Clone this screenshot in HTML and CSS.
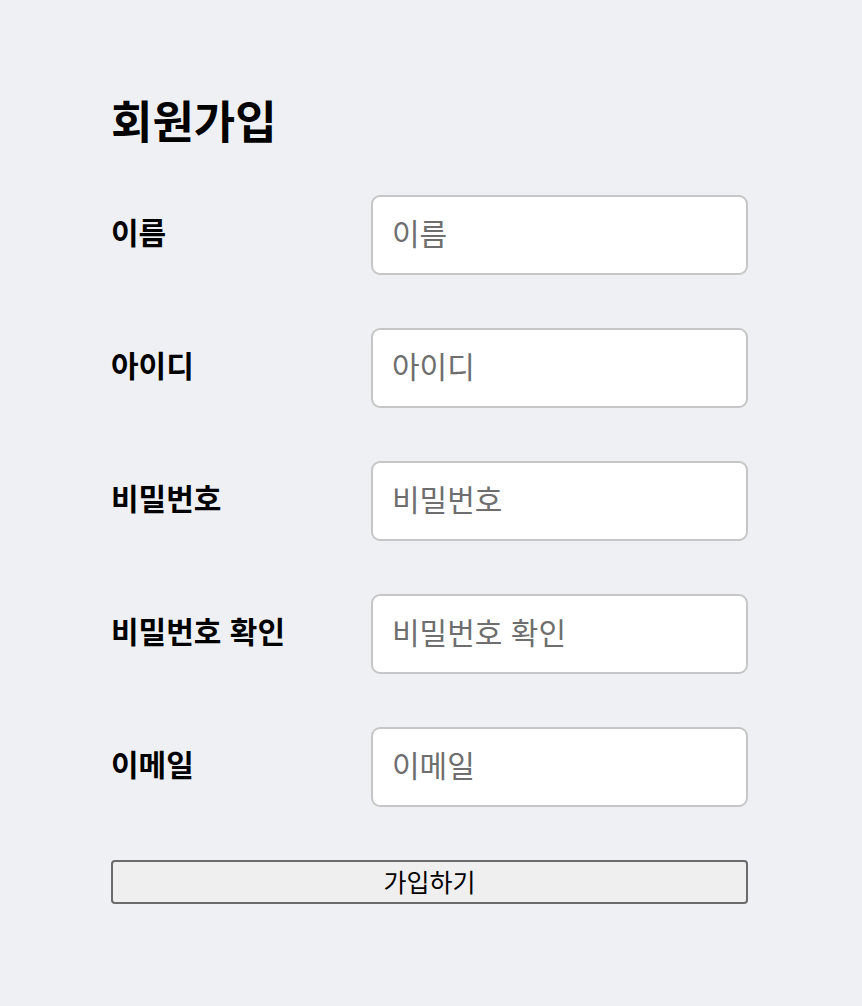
FILE: index.html
```html
<!DOCTYPE html>
<html lang="ko">
<head>
<meta charset="utf-8">
<title>회원가입</title>
<link rel="stylesheet" href="styles.css">
</head>
<body>
<main class="signup">
  <h1 class="signup-title">회원가입</h1>
  <form class="signup-form">
    <div class="field">
      <label class="field-label" for="name">이름</label>
      <input class="field-input" id="name" type="text" placeholder="이름">
    </div>
    <div class="field">
      <label class="field-label" for="uid">아이디</label>
      <input class="field-input" id="uid" type="text" placeholder="아이디">
    </div>
    <div class="field">
      <label class="field-label" for="pw">비밀번호</label>
      <input class="field-input" id="pw" type="password" placeholder="비밀번호">
    </div>
    <div class="field">
      <label class="field-label" for="pw2">비밀번호 확인</label>
      <input class="field-input" id="pw2" type="password" placeholder="비밀번호 확인">
    </div>
    <div class="field">
      <label class="field-label" for="email">이메일</label>
      <input class="field-input" id="email" type="email" placeholder="이메일">
    </div>
    <button class="submit" type="submit">가입하기</button>
  </form>
</main>
</body>
</html>
```
FILE: styles.css
```css
html, body {
  margin: 0;
  padding: 0;
  background: #eff0f4;
}
body {
  font-family: "Noto Sans CJK KR", "Noto Sans", sans-serif;
  color: #000;
}
.signup {
  width: 637px;
  margin: 0 0 0 111px;
  padding-top: 85px;
}
.signup-title {
  margin: 0 0 40px;
  font-size: 45px;
  font-weight: 700;
  line-height: 70px;
}
.signup-form {
  display: flex;
  flex-direction: column;
  gap: 53px;
}
.field {
  display: grid;
  grid-template-columns: 260px 377px;
  align-items: center;
}
.field-label {
  font-size: 30px;
  font-weight: 700;
  line-height: 44px;
  padding-bottom: 8px;
}
.field-input {
  box-sizing: border-box;
  width: 377px;
  height: 80px;
  margin: 0;
  padding: 0 19px 7px;
  border: 2px solid #c6c6c8;
  border-radius: 9px;
  background: #fff;
  font-family: inherit;
  font-size: 30px;
  color: #333;
  outline: none;
}
.field-input::placeholder {
  color: #6e6e6e;
}
.submit {
  box-sizing: border-box;
  width: 637px;
  height: 44px;
  margin: 0;
  padding: 0 0 2px;
  border: 2px solid #6b6b6b;
  border-radius: 4px;
  background: #efefef;
  font-family: inherit;
  font-size: 25px;
  color: #000;
  line-height: 1;
}
```
